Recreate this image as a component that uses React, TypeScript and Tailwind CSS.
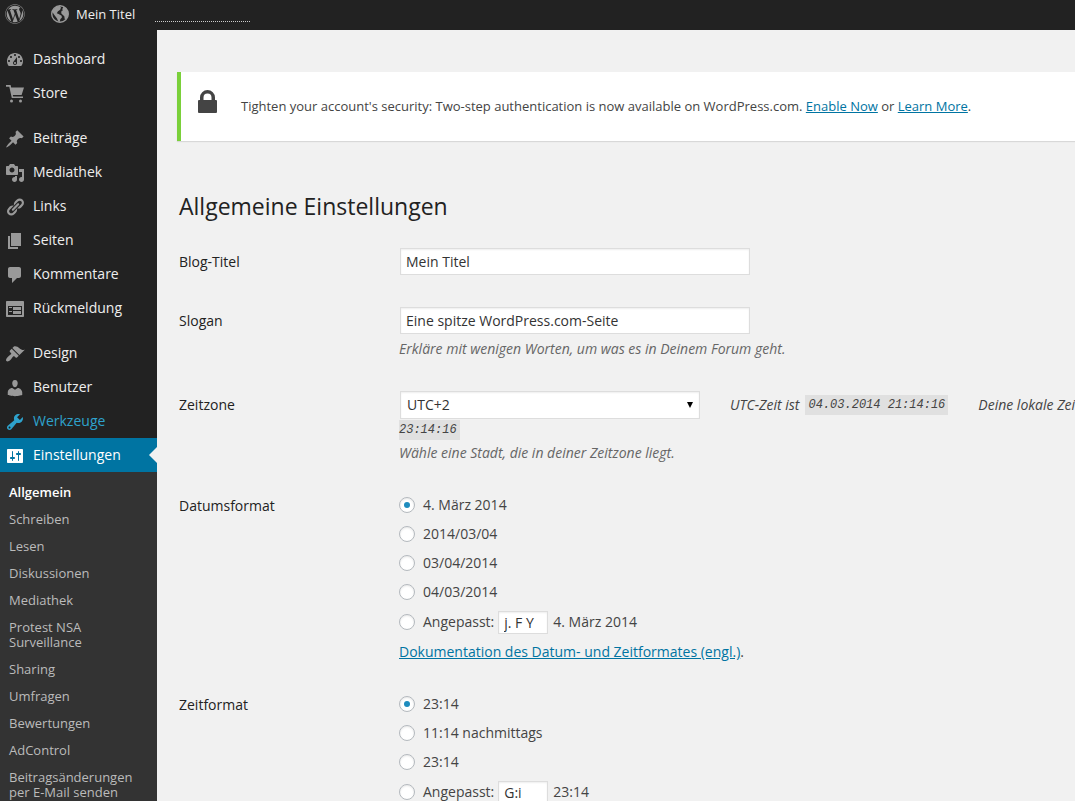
import { useState, type ReactNode } from 'react';
import { FaWordpress } from 'react-icons/fa';

type MenuItem = { label: string; icon: string; state?: 'hover' | 'current' };

// ---- icon paths (20x20 grid) ----
const ICONS = {
  dashboard: 'M3.76 16h12.48c1.1-1.37 1.76-3.11 1.76-5 0-4.42-3.58-8-8-8s-8 3.58-8 8c0 1.89.66 3.63 1.76 5zM10 4c.55 0 1 .45 1 1s-.45 1-1 1-1-.45-1-1 .45-1 1-1zM6 6c.55 0 1 .45 1 1s-.45 1-1 1-1-.45-1-1 .45-1 1-1zm8 0c.55 0 1 .45 1 1s-.45 1-1 1-1-.45-1-1 .45-1 1-1zm-5.37 5.55L12 7v6c0 1.1-.9 2-2 2s-2-.9-2-2c0-.57.24-1.08.63-1.45zM4 10c.55 0 1 .45 1 1s-.45 1-1 1-1-.45-1-1 .45-1 1-1zm12 0c.55 0 1 .45 1 1s-.45 1-1 1-1-.45-1-1 .45-1 1-1zm-5 3c0-.55-.45-1-1-1s-1 .45-1 1 .45 1 1 1 1-.45 1-1z',
  store: 'M1 1h4.600l.6 2.500H19l-2.400 7.500H7.800l.4 1.500H18V14H6.800L4.300 2.800H1zM6.500 15.400a1.500 1.500 0 1 1 0 3 1.500 1.500 0 0 1 0-3zm9 0a1.500 1.500 0 1 1 0 3 1.500 1.500 0 0 1 0-3z',
  post: 'M10.44 3.02l1.82-1.82 6.36 6.35-1.83 1.82c-1.05-.68-2.48-.57-3.41.36l-.75.75c-.92.93-1.04 2.35-.35 3.41l-1.83 1.82-2.41-2.41-2.8 2.79c-.42.42-3.38 2.71-3.8 2.29s1.86-3.39 2.28-3.81l2.79-2.79L4.1 9.36l1.83-1.82c1.05.69 2.48.57 3.4-.36l.75-.75c.93-.92 1.05-2.35.36-3.41z',
  media: 'M13 11V4c0-.55-.45-1-1-1h-1.67L9 1H5L3.67 3H2c-.55 0-1 .45-1 1v7c0 .55.45 1 1 1h10c.55 0 1-.45 1-1zM7 4.5c1.38 0 2.5 1.12 2.5 2.5S8.38 9.5 7 9.5 4.5 8.38 4.5 7 5.62 4.5 7 4.5zM14 6h5v10.5c0 1.38-1.12 2.5-2.5 2.5S14 17.88 14 16.5s1.12-2.5 2.5-2.5c.17 0 .34.02.5.05V9h-3V6zm-4 8.05V13h2v3.5c0 1.38-1.12 2.5-2.5 2.5S7 17.88 7 16.5 8.12 14 9.5 14c.17 0 .34.02.5.05z',
  links: 'M17.74 2.76c1.68 1.69 1.68 4.41 0 6.1l-1.53 1.52c-1.12 1.12-2.7 1.47-4.14 1.09l2.62-2.61.76-.77.76-.76c.84-.84.84-2.2 0-3.04-.84-.85-2.2-.85-3.04 0l-.77.76-3.38 3.38c-.37-1.44-.02-3.02 1.1-4.14l1.52-1.53c1.69-1.68 4.42-1.68 6.1 0zM8.59 13.43l5.34-5.34c.42-.42.42-1.1 0-1.52-.44-.43-1.13-.39-1.53 0l-5.33 5.34c-.42.42-.42 1.1 0 1.52.44.43 1.13.39 1.52 0zm-.76 2.29l4.14-4.15c.38 1.44.03 3.02-1.09 4.14l-1.52 1.53c-1.69 1.68-4.41 1.68-6.1 0-1.68-1.68-1.68-4.42 0-6.1l1.53-1.52c1.12-1.12 2.7-1.47 4.14-1.1l-4.14 4.15c-.85.84-.85 2.2 0 3.05.84.84 2.2.84 3.04 0z',
  page: 'M6 15V2h10v13H6zm-1 1h8v2H3V5h2v11z',
  comments: 'M5 2h9c1.1 0 2 .9 2 2v7c0 1.1-.9 2-2 2h-2l-5 5v-5H5c-1.1 0-2-.9-2-2V4c0-1.1.9-2 2-2z',
  feedback: 'M2 2h16c.55 0 1 .45 1 1v14c0 .55-.45 1-1 1H2c-.55 0-1-.45-1-1V3c0-.55.45-1 1-1zm15 14V7H3v9h14zM4 8v1h3V8H4zm4 0v3h8V8H8zm-4 4v1h3v-1H4zm4 0v3h8v-3H8z',
  design: 'M14.48 11.06L7.41 3.99l1.5-1.5c.5-.56 2.3-.47 3.51.32 1.21.8 1.43 1.28 2.91 2.1 1.18.64 2.45 1.26 4.45.85zm-.71.71L6.7 4.7 4.93 6.47c-.39.39-.39 1.02 0 1.41l1.06 1.06c.39.39.39 1.03 0 1.42-.6.6-1.43 1.11-2.21 1.69-.35.26-.7.53-1.01.84C1.43 14.23.4 16.08 1.4 17.07c.99 1 2.84-.03 4.18-1.36.31-.31.58-.66.85-1.02.57-.78 1.08-1.61 1.69-2.21.39-.39 1.02-.39 1.41 0l1.06 1.06c.39.39 1.02.39 1.41 0z',
  users: 'M10 9.25c-2.27 0-2.73-3.44-2.73-3.44C7 4.02 7.82 2 9.97 2c2.16 0 2.98 2.02 2.71 3.81 0 0-.41 3.44-2.68 3.44zm0 2.57L12.72 10c2.39 0 4.52 2.33 4.52 4.53v2.49s-3.65 1.13-7.24 1.13c-3.65 0-7.24-1.13-7.24-1.13v-2.49c0-2.25 1.94-4.48 4.47-4.48z',
  tools: 'M16.68 9.77c-1.34 1.34-3.3 1.67-4.95.99l-5.41 6.52c-.99.99-2.59.99-3.58 0s-.99-2.59 0-3.57l6.52-5.42c-.68-1.65-.35-3.61.99-4.95 1.28-1.28 3.12-1.62 4.72-1.06l-2.89 2.89 2.82 2.82 2.86-2.87c.53 1.58.18 3.39-1.08 4.65zM3.81 16.21c.4.39 1.04.39 1.43 0 .4-.4.4-1.04 0-1.43-.39-.4-1.03-.4-1.43 0-.39.39-.39 1.03 0 1.43z',
  settings: 'M18 16V4c0-.55-.45-1-1-1H3c-.55 0-1 .45-1 1v12c0 .55.45 1 1 1h14c.55 0 1-.45 1-1zM8 11h1c.55 0 1 .45 1 1s-.45 1-1 1H8v1.5c0 .28-.22.5-.5.5s-.5-.22-.5-.5V13H6c-.55 0-1-.45-1-1s.45-1 1-1h1V5.5c0-.28.22-.5.5-.5s.5.22.5.5V11zm5-2h-1c-.55 0-1-.45-1-1s.45-1 1-1h1V5.5c0-.28.22-.5.5-.5s.5.22.5.5V7h1c.55 0 1 .45 1 1s-.45 1-1 1h-1v5.5c0 .28-.22.5-.5.5s-.5-.22-.5-.5V9z',
};

const MENU: MenuItem[][] = [
  [
    { label: 'Dashboard', icon: ICONS.dashboard },
    { label: 'Store', icon: ICONS.store },
  ],
  [
    { label: 'Beiträge', icon: ICONS.post },
    { label: 'Mediathek', icon: ICONS.media },
    { label: 'Links', icon: ICONS.links },
    { label: 'Seiten', icon: ICONS.page },
    { label: 'Kommentare', icon: ICONS.comments },
    { label: 'Rückmeldung', icon: ICONS.feedback },
  ],
  [
    { label: 'Design', icon: ICONS.design },
    { label: 'Benutzer', icon: ICONS.users },
    { label: 'Werkzeuge', icon: ICONS.tools, state: 'hover' },
    { label: 'Einstellungen', icon: ICONS.settings, state: 'current' },
  ],
];

const SUBMENU = [
  'Allgemein', 'Schreiben', 'Lesen', 'Diskussionen', 'Mediathek', 'Protest NSA Surveillance',
  'Sharing', 'Umfragen', 'Bewertungen', 'AdControl', 'Beitragsänderungen per E-Mail senden',
];

const FIELD = 'border border-[#ddd] bg-white text-[#333] shadow-[inset_0_1px_2px_rgba(0,0,0,0.07)] outline-none';

// ---------- Top bar ----------
function AdminBar() {
  return (
    <header className="flex h-[30px] shrink-0 items-center bg-[#222] pb-[2px] text-[13px] text-[#eee]">
      <a href="#wordpress" aria-label="WordPress" className="ml-[5px] flex w-[46px] text-[#999]">
        <FaWordpress size={20} />
      </a>
      <a href="#site" className="flex items-center gap-[7px]">
        <svg viewBox="0 0 18 18" className="size-[18px]" fill="#999">
          <circle cx="9" cy="9" r="8.3" fill="none" stroke="#999" strokeWidth="1.400" />
          <path d="M2.200 4.800 5 1.800 8.500.8 10 2.600 9.200 4.800 7 6.200 5.800 8.200 7.600 9l3 1.700.3 1.700-1.600 1.800-.5 2.800-1.600-.4-1.200-3.100-1.500-2L3 9.400 1.200 6.800z" />
          <path d="M11.200 4.200 12.600 1.600 15.400 3.400 17.200 6.800l-.2 4.500-1.800 3-1.400.2-.5-3.300-1.700-1.400-1.400-1.600.3-2.100 1.500-.9z" />
        </svg>
        Mein Titel
      </a>
      <span className="ml-5 mt-[15px] w-[95px] border-b border-dotted border-[#ccc]" />
    </header>
  );
}

// ---------- Sidebar ----------
function Sidebar() {
  return (
    <nav className="w-[157px] shrink-0 overflow-hidden bg-[#222] pt-3">
      <div className="flex flex-col gap-[11px]">
        {MENU.map((group, i) => (
          <ul key={i}>
            {group.map(item => (
              <li key={item.label}>
                <a
                  href={`#${item.label}`}
                  className={`relative flex h-[34px] items-start pl-[5px] ${
                    item.state === 'current' ? 'bg-[#0074a2] text-white' : item.state === 'hover' ? 'text-[#2ea2cc]' : 'text-[#eee]'
                  }`}
                >
                  <svg
                    viewBox="0 0 20 20"
                    fillRule="evenodd"
                    className={`mt-2 size-5 fill-current ${item.state ? '' : 'text-[#999]'}`}
                  >
                    <path d={item.icon} />
                  </svg>
                  <span className="ml-2 text-sm leading-[34px]">{item.label}</span>
                  {item.state === 'current' && (
                    <span className="absolute right-0 top-[9px] border-y-8 border-r-8 border-y-transparent border-r-[#f1f1f1]" />
                  )}
                </a>
              </li>
            ))}
          </ul>
        ))}
      </div>
      <ul className="h-full bg-[#333] pt-[7px] text-[13px] leading-[15px] text-[#bbb]">
        {SUBMENU.map((label, i) => (
          <li key={label}>
            <a href={`#sub-${i}`} className={`block py-[6px] pl-[9px] pr-5 ${i === 0 ? 'font-semibold text-white' : ''}`}>
              {label}
            </a>
          </li>
        ))}
      </ul>
    </nav>
  );
}

// ---------- Form parts ----------
function Row({ label, htmlFor, children }: { label: string; htmlFor?: string; children: ReactNode }) {
  return (
    <div className="flex">
      <div className={`w-[220px] shrink-0 font-medium text-[#222] ${htmlFor ? 'pt-1' : 'pt-px'}`}>
        {htmlFor ? <label htmlFor={htmlFor}>{label}</label> : <span>{label}</span>}
      </div>
      <div className="min-w-0 grow">{children}</div>
    </div>
  );
}

function FormatChoice({ name, title, options, format, preview }: {
  name: string; title: string; options: string[]; format: string; preview: string;
}) {
  const [picked, setPicked] = useState(0);
  const [custom, setCustom] = useState(format);
  const radio = 'relative size-4 shrink-0 appearance-none rounded-full border border-[#b4b9be] bg-white shadow-[inset_0_1px_2px_rgba(0,0,0,0.1)] checked:before:absolute checked:before:left-1 checked:before:top-1 checked:before:size-[6px] checked:before:rounded-full checked:before:bg-[#1e8cbe]';
  return (
    <fieldset className="flex flex-col gap-[9px]" aria-label={title}>
      {options.map((text, i) => (
        <label key={i} className="flex h-5 items-center gap-2">
          <input type="radio" name={name} className={radio} checked={picked === i} onChange={() => setPicked(i)} />
          {text}
        </label>
      ))}
      <div className="flex h-[22px] items-center">
        <label className="flex items-center gap-2">
          <input type="radio" name={name} className={radio} checked={picked === options.length} onChange={() => setPicked(options.length)} />
          Angepasst:
        </label>
        <input
          type="text"
          aria-label={`${title} angepasst`}
          value={custom}
          onChange={e => setCustom(e.target.value)}
          className={`ml-1 mr-[5px] h-[23px] w-[50px] px-[5px] ${FIELD}`}
        />
        <span>{preview}</span>
      </div>
    </fieldset>
  );
}

export default function App() {
  const [title, setTitle] = useState('Mein Titel');
  const [slogan, setSlogan] = useState('Eine spitze WordPress.com-Seite');
  const code = 'bg-[#e0e0e0] font-["Liberation_Mono",monospace] text-xs leading-5';

  return (
    <div className='flex h-screen flex-col overflow-hidden bg-[#f1f1f1] font-["Open_Sans",sans-serif] text-sm leading-5 text-[#444]'>
      <AdminBar />
      <div className="flex min-h-0 grow">
        <Sidebar />
        <main className="min-w-0 grow overflow-hidden pl-5 pt-[42px]">
          {/* Security notice */}
          <div className="flex h-[69px] items-center border-l-4 border-[#7ad03a] bg-white pb-[2px] pl-[17px] text-[13px] shadow-[0_1px_1px_rgba(0,0,0,0.1)]">
            <svg viewBox="0 0 19 23" className="mb-2 mr-6 h-[23px] w-[19px] shrink-0" fill="#444">
              <path fillRule="evenodd" d="M2 10V7.5a7.5 7.5 0 0 1 15 0V10h1a1 1 0 0 1 1 1v11a1 1 0 0 1-1 1H1a1 1 0 0 1-1-1V11a1 1 0 0 1 1-1zm3.500 0h8V7.500a4 4 0 0 0-8 0z" />
            </svg>
            <p className="whitespace-nowrap">
              Tighten your account's security: Two-step authentication is now available on WordPress.com.{' '}
              <a href="#enable" className="text-[#0074a2] underline">Enable Now</a> or{' '}
              <a href="#learn" className="text-[#0074a2] underline">Learn More</a>.
            </p>
          </div>

          <h1 className="ml-[2px] mt-[49px] text-[23px] leading-8 text-[#222]">Allgemeine Einstellungen</h1>

          {/* Settings form */}
          <form className="ml-[2px] mt-[26px] flex flex-col gap-8" onSubmit={e => e.preventDefault()}>
            <Row label="Blog-Titel" htmlFor="blogname">
              <input id="blogname" type="text" value={title} onChange={e => setTitle(e.target.value)} className={`ml-px block h-[27px] w-[350px] px-[5px] ${FIELD}`} />
            </Row>

            <Row label="Slogan" htmlFor="blogdescription">
              <input id="blogdescription" type="text" value={slogan} onChange={e => setSlogan(e.target.value)} className={`ml-px block h-[27px] w-[350px] px-[5px] ${FIELD}`} />
              <p className="mt-[5px] italic text-[#666]">Erkläre mit wenigen Worten, um was es in Deinem Forum geht.</p>
            </Row>

            <Row label="Zeitzone" htmlFor="timezone">
              <div className="flex items-center whitespace-nowrap italic">
                <div className="relative ml-px shrink-0 not-italic">
                  <select id="timezone" defaultValue="2" className={`block h-7 w-[300px] appearance-none px-[6px] ${FIELD}`}>
                    <option value="1">UTC+1</option>
                    <option value="2">UTC+2</option>
                    <option value="3">UTC+3</option>
                  </select>
                  <svg viewBox="0 0 6 6" className="pointer-events-none absolute right-[7px] top-[11px] size-[6px]">
                    <path d="M0 0h6L3 6z" />
                  </svg>
                </div>
                <span className="ml-[30px]">UTC-Zeit ist</span>
                <code className={`ml-[6px] px-[3px] ${code}`}>04.03.2014 21:14:16</code>
                <span className="ml-[30px]">Deine lokale Zeit ist</span>
              </div>
              <code className={`mt-px block w-fit pr-[3px] italic ${code}`}>23:14:16</code>
              <p className="mt-[3px] italic text-[#666]">Wähle eine Stadt, die in deiner Zeitzone liegt.</p>
            </Row>

            <Row label="Datumsformat">
              <FormatChoice
                name="date_format"
                title="Datumsformat"
                options={['4. März 2014', '2014/03/04', '03/04/2014', '04/03/2014']}
                format="j. F Y"
                preview="4. März 2014"
              />
              <p className="mt-[9px]">
                <a href="#doku" className="text-[#0074a2] underline">Dokumentation des Datum- und Zeitformates (engl.)</a>.
              </p>
            </Row>

            <Row label="Zeitformat">
              <FormatChoice
                name="time_format"
                title="Zeitformat"
                options={['23:14', '11:14 nachmittags', '23:14']}
                format="G:i"
                preview="23:14"
              />
            </Row>
          </form>
        </main>
      </div>
    </div>
  );
}
